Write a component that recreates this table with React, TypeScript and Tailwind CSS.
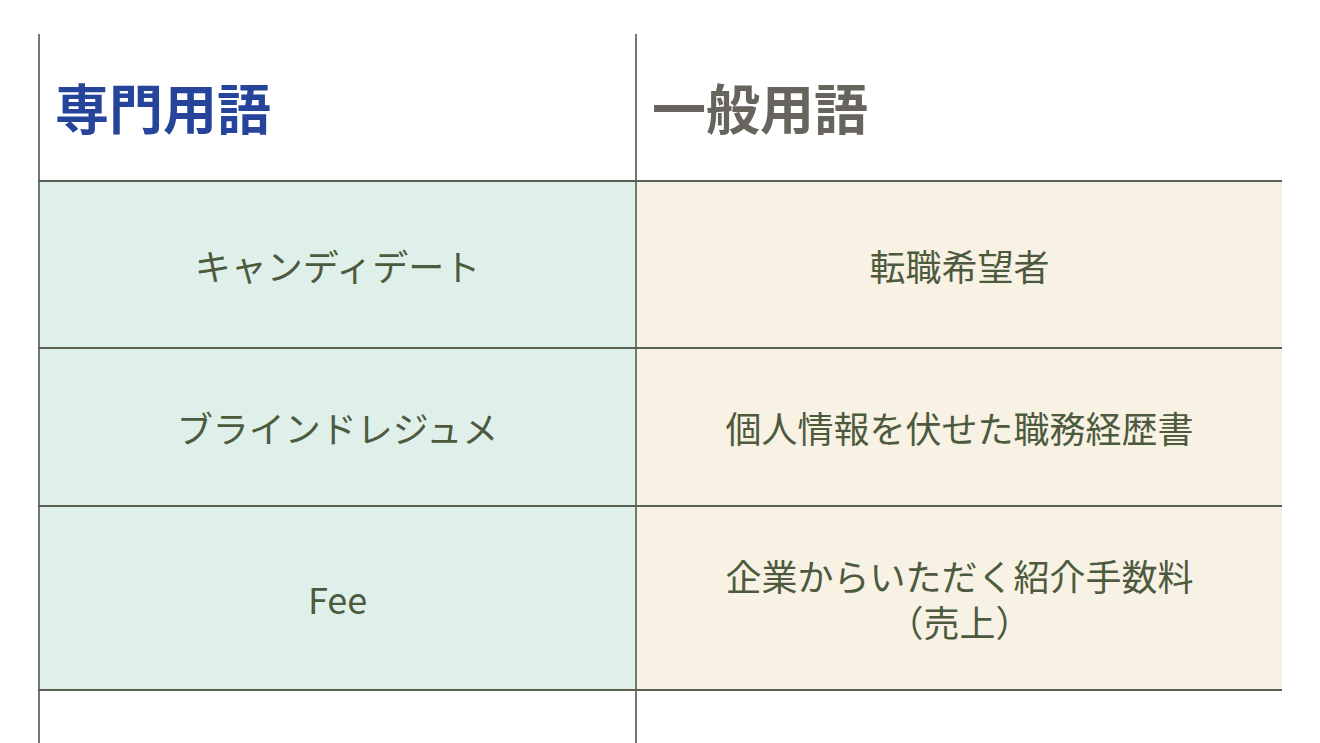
import React from "react";

const rows = [
  { term: "キャンディデート", plain: ["転職希望者"], h: "h-[167px]" },
  { term: "ブラインドレジュメ", plain: ["個人情報を伏せた職務経歴書"], h: "h-[158px]" },
  { term: "Fee", plain: ["企業からいただく紹介手数料", "（売上）"], h: "h-[184px]" },
];

export default function App() {
  return (
    <div
      className="min-h-[743px] bg-white pl-[38px] pt-[34px] overflow-hidden"
      style={{ fontFamily: '"Noto Sans CJK JP", "Noto Sans", sans-serif' }}
    >
      <div className="w-[1244px]">
        {/* Header */}
        <div className="grid grid-cols-[597px_647px] h-[146px]">
          <div className="border-l-2 border-[#74776f] flex items-center pl-[15px]">
            <h2 className="text-[54px] font-bold leading-none text-[#25449a]">
              専門用語
            </h2>
          </div>
          <div className="border-l-2 border-[#74776f] flex items-center pl-[15px]">
            <h2 className="text-[54px] font-bold leading-none text-[#67645d]">
              一般用語
            </h2>
          </div>
        </div>

        {/* Body rows */}
        {rows.map((r) => (
          <div
            key={r.term}
            className={`grid grid-cols-[597px_647px] border-t-2 border-[#5a6152] ${r.h}`}
          >
            <div className="border-l-2 border-[#74776f] bg-[#dff0eb] flex items-center justify-center">
              <span className="text-[36px] leading-[46px] text-[#4d5a3e]">{r.term}</span>
            </div>
            <div className="border-l-2 border-[#74776f] bg-[#f7f2e4] flex flex-col items-center justify-center">
              <p className="text-[36px] leading-[46px] text-[#4d5a3e] text-center">
                {r.plain.map((line, i) => (
                  <React.Fragment key={line}>
                    {i > 0 && <br />}
                    {line}
                  </React.Fragment>
                ))}
              </p>
            </div>
          </div>
        ))}

        {/* Empty trailing row */}
        <div className="grid grid-cols-[597px_647px] border-t-2 border-[#5a6152] h-[60px]">
          <div className="border-l-2 border-[#74776f]" />
          <div className="border-l-2 border-[#74776f]" />
        </div>
      </div>
    </div>
  );
}
